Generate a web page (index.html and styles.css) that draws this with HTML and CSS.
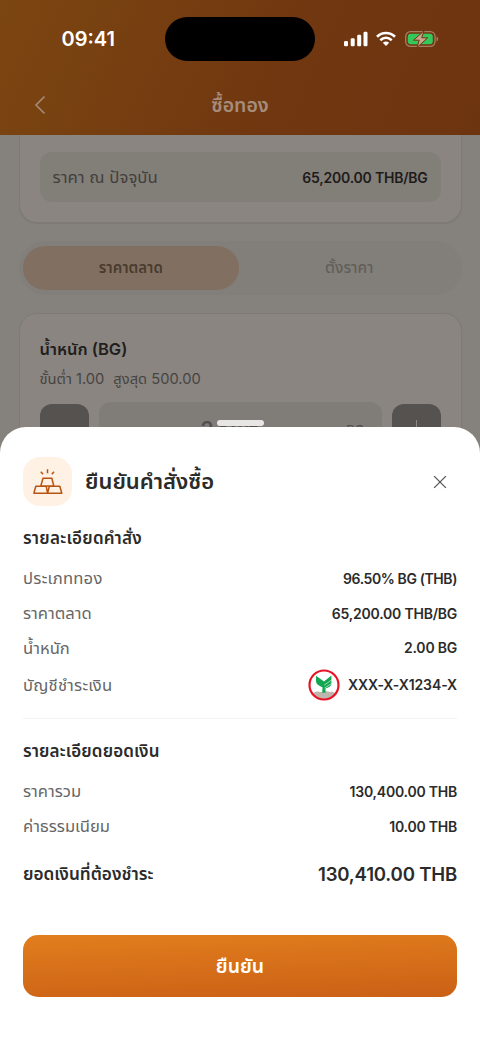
FILE: index.html
```html
<!DOCTYPE html>
<html lang="th">
<head>
<meta charset="utf-8">
<title>ซื้อทอง</title>
<link rel="stylesheet" href="styles.css">
</head>
<body>
<div class="phone">
  <header class="header">
    <div class="status">
      <span class="time">09:41</span>
      <div class="island"></div>
      <div class="indicators">
        <svg width="24" height="16" viewBox="0 0 24 16" fill="#fff"><rect x="0" y="10" width="4" height="5.300" rx="1.200"/><rect x="6.700" y="7.200" width="4" height="8.100" rx="1.200"/><rect x="13.200" y="3.800" width="4" height="11.500" rx="1.200"/><rect x="19.500" y=".7" width="4" height="14.600" rx="1.200"/></svg>
        <svg class="wifi" width="20" height="16" viewBox="0 0 20 16" fill="none" stroke="#fff" stroke-width="2.600"><path d="M1 5.800C6.200 .8 13.800 .8 19 5.800M4.300 9.200C7.700 6 12.300 6 15.700 9.200"/><path d="M6.800 11.700C8.800 10 11.200 10 13.200 11.700L10 15Z" fill="#fff" stroke="none"/></svg>
        <svg class="battery" width="34" height="18" viewBox="0 0 34 18"><rect x=".7" y="1.700" width="29.300" height="14.600" rx="4.700" fill="none" stroke="#a77d62" stroke-width="1.300"/><rect x="2.800" y="3.700" width="25" height="10.600" rx="3" fill="#34c759"/><path d="M31.500 6.500v5c2.200-.9 2.200-4.100 0-5z" fill="#a77d62"/><path d="M19 .8 8.600 10.200h5.600L12 17.600 22.600 7.800h-5.900z" fill="#c8a58c" stroke="#6f3510" stroke-width="1"/></svg>
      </div>
    </div>
    <div class="nav">
      <svg class="back" width="12" height="20" viewBox="0 0 12 20" fill="none" stroke="#a48c7b" stroke-width="1.600"><path d="M10.500 1.500 2 10l8.500 8.500"/></svg>
      <h1 class="nav-title">ซื้อทอง</h1>
    </div>
  </header>
  <main class="content">
    <section class="card price-card">
      <div class="price-box"><span class="price-label">ราคา ณ ปัจจุบัน</span><b class="value dark">65,200.00 THB/BG</b></div>
    </section>
    <div class="tabs"><div class="tab active">ราคาตลาด</div><div class="tab">ตั้งราคา</div></div>
    <section class="card weight-card">
      <h2 class="weight-title">น้ำหนัก (BG)</h2>
      <p class="limits"><span>ขั้นต่ำ 1.00</span><span>สูงสุด 500.00</span></p>
      <div class="stepper"><div class="step"></div><div class="amount"><span class="number">2 <small>BAHT</small></span><span class="unit">BG</span></div><div class="step"><i class="plus"></i></div></div>
    </section>
  </main>
  <section class="sheet">
    <div class="handle"></div>
    <div class="sheet-head">
      <div class="gold"><svg width="30" height="27" viewBox="0 0 30 27" fill="none" stroke="#b85412" stroke-width="1.500" stroke-linejoin="round"><path d="M10 10.300h8.800l2 7.700H7.800zM2.800 18.200h10.400l1.400 7.100H.9zM16.300 18.200h10.500l2 7.100H14.600zM14.500 1.300v4M7.800 3.700l2.200 2.600M21 3.700l-2.200 2.600"/></svg></div>
      <h2 class="sheet-title">ยืนยันคำสั่งซื้อ</h2>
      <svg class="close" width="14" height="14" viewBox="0 0 14 14" stroke="#555" stroke-width="1.300"><path d="m1.100 1.100 11.800 11.800M12.900 1.100 1.100 12.900"/></svg>
    </div>
    <h3 class="section order-title">รายละเอียดคำสั่ง</h3>
    <div class="row"><span class="label wide">ประเภททอง</span><b class="value tight">96.50% BG (THB)</b></div>
    <div class="row"><span class="label">ราคาตลาด</span><b class="value">65,200.00 THB/BG</b></div>
    <div class="row"><span class="label">น้ำหนัก</span><b class="value">2.00 BG</b></div>
    <div class="row bank-row"><span class="label wide">บัญชีชำระเงิน</span><span class="account"><svg width="32" height="32" viewBox="0 0 32 32"><circle cx="16" cy="16" r="14.500" fill="#fff"/><path d="M5 24.500c3-3 6-2 8-1.400 3-1 7-1.200 9-.2 2-.4 4 0 5 1.600C21 32 11 32 5 24.500z" fill="#bdb5ae"/><path d="M8 6.800 16 12.500 23.400 6.600v9c-.8 2-3 3.300-6 3.900l.3 4.200h-3.500l.3-5.400C11 16.800 8 15 8 12z" fill="#12a650"/><path d="m16.300 16 7.300-5M16.600 19l7-4.500" stroke="#fff" stroke-width=".6"/><circle cx="16" cy="16" r="14.500" fill="none" stroke="#e71426" stroke-width="2.200"/></svg><b class="value account-no">XXX-X-X1234-X</b></span></div>
    <div class="divider"></div>
    <h3 class="section amount-title">รายละเอียดยอดเงิน</h3>
    <div class="row"><span class="label">ราคารวม</span><b class="value">130,400.00 THB</b></div>
    <div class="row"><span class="label narrow">ค่าธรรมเนียม</span><b class="value">10.00 THB</b></div>
    <div class="total"><b class="total-label">ยอดเงินที่ต้องชำระ</b><b class="total-value">130,410.00 THB</b></div>
    <button class="confirm">ยืนยัน</button>
  </section>
</div>
</body>
</html>
```
FILE: styles.css
```css
* { box-sizing: border-box; }
body { margin: 0; font-family: Inter, "Noto Sans Thai", "Noto Sans", sans-serif; color: #2b2b2b; }
h1, h2, h3, p { margin: 0; font-weight: 600; }
span, b { white-space: nowrap; }
.phone { position: relative; width: 480px; height: 1044px; overflow: hidden; background: #85817c; }
.header { height: 135px; background: linear-gradient(115deg, #7c4611 0%, #703710 60%, #6d3410 100%); }
.status { display: grid; grid-template-columns: 165px 150px 165px; height: 76px; padding-top: 17px; }
.time { padding-left: 61.500px; line-height: 45px; font-size: 20px; font-weight: 600; color: #fff; }
.island { height: 44px; border-radius: 22px; background: #000; }
.indicators { display: flex; align-items: center; height: 44px; padding-left: 29px; }
.wifi { margin-left: 8px; }
.battery { margin-left: 9px; }
.nav { display: grid; grid-template-columns: 60px 1fr 60px; align-items: center; height: 57px; }
.back { margin-left: 34px; }
.nav-title { padding-top: 1px; text-align: center; font-size: 19.500px; line-height: 30px; color: #a58c7c; }
.content { padding: 0 18.500px; }
.card { background: #8a8581; border: 1px solid #7e7a76; border-radius: 18px; box-shadow: 0 1px 1px #7e7a76; }
.price-card { height: 88px; padding: 17px 20px; border-top: 0; border-radius: 0 0 18px 18px; }
.price-box { display: flex; align-items: center; justify-content: space-between; height: 50px; padding: 2px 13px 0; border-radius: 12px; background: #827e78; }
.price-label { font-size: 16.800px; color: #42403e; }
.value { font-size: 14px; line-height: 24px; font-weight: 600; letter-spacing: -.22px; }
.tight { letter-spacing: -.4px; }
.account-no { letter-spacing: -.1px; }
.dark { color: #1e1b1a; }
.tabs { display: flex; gap: 3px; height: 54px; margin-top: 18px; padding: 5px 4.500px; border-radius: 27px; background: #827e79; }
.tab { flex: 1; display: flex; align-items: center; justify-content: center; border-radius: 23px; font-size: 15.400px; font-weight: 500; color: #615e5a; }
.active { background: #817061; font-size: 15px; font-weight: 600; color: #4a3b2f; }
.weight-card { height: 200px; margin-top: 18px; padding: 21px 20px; }
.weight-title { height: 28px; line-height: 28px; font-size: 16.500px; color: #211e1d; }
.limits { display: flex; gap: 9px; height: 24px; margin-top: 4px; line-height: 24px; font-size: 14.700px; font-weight: 400; color: #474442; }
.stepper { display: flex; gap: 10px; margin-top: 11px; }
.step { width: 49px; height: 49px; margin-top: 2px; border-radius: 12px; background: #565250; }
.plus { display: block; width: 1px; height: 18px; margin: 16px auto 0; background: #8d8884; }
.amount { flex: 1; display: flex; align-items: center; height: 55px; padding: 0 17px 0 102px; border-radius: 12px; background: #807c78; }
.number { flex: 1; font-size: 21px; font-weight: 600; color: #53504d; }
.number small { font-size: 14px; }
.unit { font-size: 13px; color: #514e4b; }
.sheet { position: absolute; left: 0; top: 427px; width: 480px; height: 617px; padding: 30px 23px 0; border-radius: 26px 26px 0 0; background: #fff; }
.handle { position: absolute; left: 217px; top: -7px; width: 47px; height: 6px; border-radius: 3px; background: #e8e6e5; }
.sheet-head { display: flex; align-items: center; height: 49px; }
.gold { display: flex; align-items: center; justify-content: center; width: 49px; height: 49px; border-radius: 17px; background: #fff1e4; }
.sheet-title { flex: 1; margin-left: 13px; padding-bottom: 2px; font-size: 22px; line-height: 34px; }
.close { margin-right: 10.500px; }
.section { height: 30px; margin-top: 17px; line-height: 31px; font-size: 17px; }
.row { display: flex; align-items: center; justify-content: space-between; height: 34.700px; }
.order-title { margin-bottom: 8.500px; letter-spacing: .25px; }
.label { padding-bottom: 1px; font-size: 16.600px; line-height: 24px; color: #666; }
.wide { letter-spacing: .25px; }
.narrow { letter-spacing: -.05px; }
.bank-row { height: 38.500px; }
.bank-row .label { padding: 0; }
.account { display: flex; align-items: center; gap: 8px; }
.divider { height: 1px; margin-top: 14px; background: #f3f3f3; }
.amount-title { margin-bottom: 8.500px; letter-spacing: .12px; }
.total { display: flex; align-items: center; justify-content: space-between; height: 30px; margin-top: 15.500px; }
.total b { font-weight: 600; }
.total-label { padding-top: 2px; font-size: 17.200px; }
.total-value { font-size: 18.600px; letter-spacing: -.2px; }
.confirm { display: block; width: 434px; height: 62px; margin-top: 46px; padding: 2px 0 0; border: 0; border-radius: 15px; background: linear-gradient(178deg, #e27e1d, #ca6016); color: #fff; font: 600 19.400px Inter, "Noto Sans Thai", sans-serif; }
```
